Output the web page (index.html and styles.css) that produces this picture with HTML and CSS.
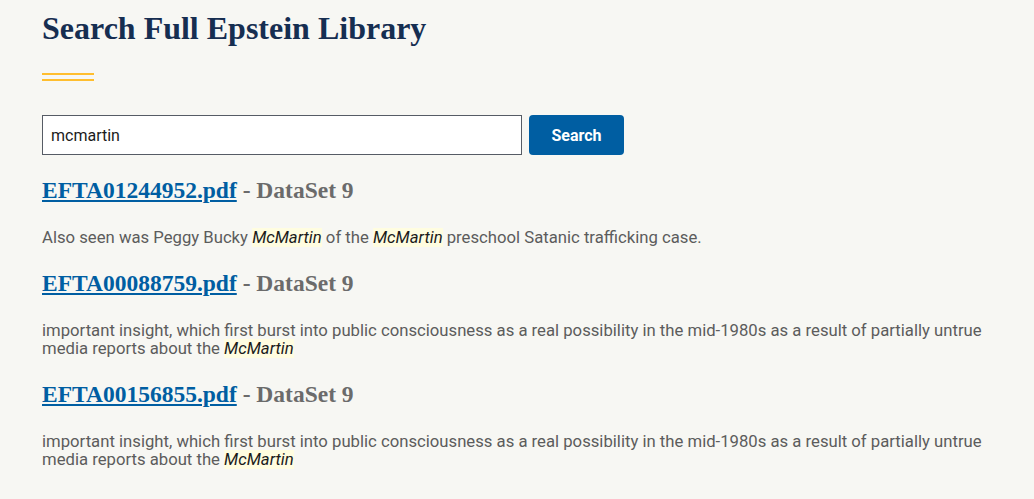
FILE: index.html
```html
<!DOCTYPE html>
<html lang="en">
<head>
<meta charset="utf-8">
<title>Search Full Epstein Library</title>
<link rel="stylesheet" href="styles.css">
</head>
<body>
<main class="page">
  <h1 class="title">Search Full Epstein Library</h1>
  <div class="rule"><span></span><span></span></div>
  <form class="search">
    <input class="search-input" type="text" value="mcmartin">
    <button class="search-btn" type="button">Search</button>
  </form>
  <div class="results">
    <div class="result">
      <h2 class="result-title"><a href="#">EFTA01244952.pdf</a> - DataSet 9</h2>
      <p class="snippet">Also seen was Peggy Bucky <em class="hl">McMartin</em> of the <em class="hl">McMartin</em> preschool Satanic trafficking case.</p>
    </div>
    <div class="result">
      <h2 class="result-title"><a href="#">EFTA00088759.pdf</a> - DataSet 9</h2>
      <p class="snippet">important insight, which first burst into public consciousness as a real possibility in the mid-1980s as a result of partially untrue media reports about the <em class="hl">McMartin</em></p>
    </div>
    <div class="result">
      <h2 class="result-title"><a href="#">EFTA00156855.pdf</a> - DataSet 9</h2>
      <p class="snippet">important insight, which first burst into public consciousness as a real possibility in the mid-1980s as a result of partially untrue media reports about the <em class="hl">McMartin</em></p>
    </div>
  </div>
</main>
</body>
</html>
```
FILE: styles.css
```css
html, body {
  margin: 0;
  padding: 0;
  background: #f7f7f3;
}
body {
  font-family: Roboto, "Liberation Sans", sans-serif;
  color: #565c65;
}
.page {
  padding: 8px 42px 0 42px;
  width: 950px;
}
.title {
  margin: 0;
  font-family: "Liberation Serif", serif;
  font-weight: bold;
  font-size: 32px;
  line-height: 40px;
  color: #162e51;
}
.rule {
  margin-top: 25px;
  display: flex;
  flex-direction: column;
  gap: 4px;
  width: 52px;
}
.rule span {
  display: block;
  height: 2px;
  background: #ffbe2e;
}
.search {
  margin: 34px 0 0 0;
  display: flex;
  gap: 7px;
  align-items: stretch;
}
.search-input {
  box-sizing: border-box;
  width: 480px;
  height: 40px;
  margin: 0;
  border: 1px solid #565c65;
  border-radius: 0;
  background: #fff;
  padding: 0 8px;
  font-family: Roboto, sans-serif;
  font-size: 16px;
  color: #1b1b1b;
}
.search-btn {
  box-sizing: border-box;
  width: 95px;
  height: 40px;
  margin: 0;
  border: 0;
  border-radius: 4px;
  background: #005ea2;
  color: #fff;
  font-family: Roboto, sans-serif;
  font-weight: bold;
  font-size: 16px;
}
.results {
  margin-top: 21px;
}
.result-title {
  margin: 0;
  font-family: "Liberation Serif", serif;
  font-weight: bold;
  font-size: 23.5px;
  line-height: 28px;
  color: #6b6b6b;
}
.result-title a {
  color: #005ea2;
  text-decoration: underline;
}
.snippet {
  margin: 25px 0 22px 0;
  font-size: 16.7px;
  line-height: 18px;
  color: #5c5c5c;
}
.hl {
  background: #fffde0;
  color: #1b1b1b;
  font-style: italic;
}
```
